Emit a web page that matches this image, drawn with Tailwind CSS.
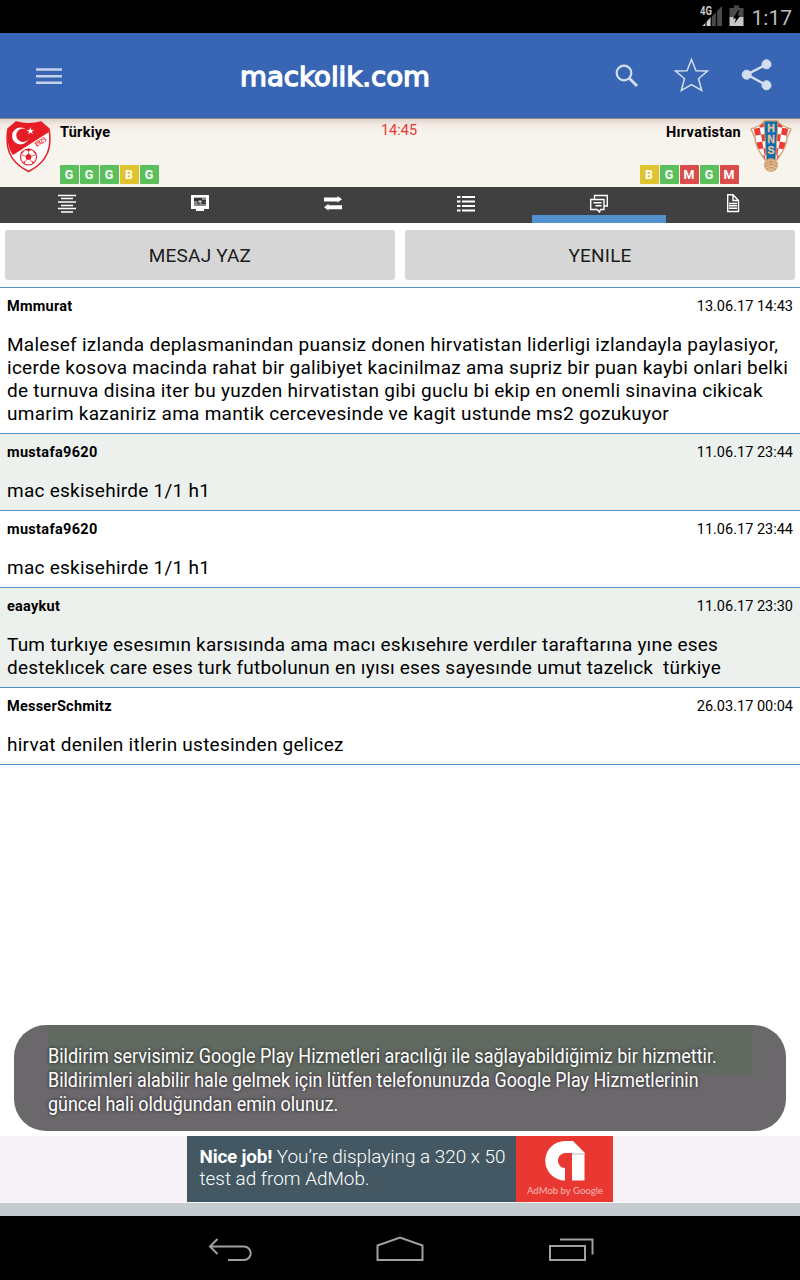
<!DOCTYPE html>
<html lang="tr">
<head>
<meta charset="utf-8">
<title>mackolik.com</title>
<script src="https://cdn.jsdelivr.net/npm/@tailwindcss/browser@4"></script>
</head>
<body class="bg-white">
<div class="relative flex h-[1280px] w-[800px] flex-col overflow-hidden bg-white font-['Roboto',sans-serif] text-black">

  <!-- status bar -->
  <div class="flex h-[33px] shrink-0 items-center justify-end bg-black pr-[8px] text-[#bdbdbd]">
    <svg class="h-[33px] w-[50px]" viewBox="0 0 50 33">
      <path d="M2.500 26 22 6V26Z" fill="#4a4a4a"/><path d="M2.500 26 11 17V26Z" fill="#d0d0d0"/>
      <path d="M6 6V26M11.200 6V26M16.500 6V26" stroke="#000" stroke-width="1.200"/>
      <rect x="-1" y="5" width="12.500" height="11" fill="#000"/>
      <text x="0" y="15" font-family="Roboto" font-weight="700" font-size="12" textLength="12" lengthAdjust="spacingAndGlyphs" fill="#c8c8c8">4G</text>
      <path d="M29.500 8H34V5.500H39V8H43.500V17H29.500Z" fill="#4a4a4a"/><rect x="29.500" y="17" width="14" height="9" fill="#c8c8c8"/>
      <path d="M38.500 10 33 18.500H36L34.500 23.500 40.500 15.500H37.500L39.500 10Z" fill="#000"/>
    </svg>
    <span class="ml-[2px] mt-[4px] text-[21px]">1:17</span>
  </div>

  <!-- app toolbar -->
  <div class="flex h-[85px] shrink-0 items-center bg-[#3866b4]">
    <svg class="ml-9 h-[18px] w-[26px]" viewBox="0 0 26 18"><path d="M0 2.500H26M0 9.200H26M0 15.700H26" stroke="#c3d1e9" stroke-width="2.600"/></svg>
    <svg class="ml-[178px] h-[40px] w-[192px]" viewBox="0 0 192 40" role="img">
      <text x="0" y="30" font-family="DejaVu Sans" font-size="26.500" textLength="190" lengthAdjust="spacingAndGlyphs" fill="#fff" stroke="#fff" stroke-width="1.300">mackolik.com</text>
    </svg>
    <svg class="ml-[183px] h-[24px] w-[24px]" viewBox="0 0 24 24" fill="none" stroke="#d3deef"><circle cx="9" cy="9" r="7.300" stroke-width="2.200"/><path d="m14.500 14.500 7.500 7.500" stroke-width="2.900"/></svg>
    <svg class="ml-[35px] h-[36px] w-[36px]" viewBox="0 0 36 36" fill="none" stroke="#d3deef" stroke-width="1.500"><path d="m17.500 1.500 4.500 11.200 11.500.3-9 7.800 3.200 11.700-10.200-6-10.200 6 3.200-11.700-9-7.800 11.500-.3Z"/></svg>
    <svg class="ml-[31px] h-[34px] w-[32px]" viewBox="0 0 32 34" fill="#d3deef" stroke="#d3deef"><path d="M26 5 6 15.500 26 26.500" fill="none" stroke-width="2.400"/><circle cx="25.500" cy="5.300" r="4.500"/><circle cx="5.700" cy="15.700" r="4.500"/><circle cx="25.500" cy="26.300" r="4.500"/></svg>
  </div>

  <!-- match header -->
  <div class="flex h-[69px] shrink-0 border-t border-[#8f8a8a] bg-linear-to-b from-[#dbd3cc] from-0% via-[#f3e9e2] via-8% to-[#f7f3ed] to-20% text-[14.500px] font-bold">
    <svg class="ml-[6px] mt-[1px] h-[54px] w-[46px] shrink-0" viewBox="0 0 46 54">
      <path d="M10 2Q22.500 5.500 35 2L43 9C46 26 43 41 22.500 51.500 2 41 -1 26 2 9Z" fill="#fff" stroke="#e71d25" stroke-width="1.500"/>
      <path d="M10 2Q22.500 5.500 35 2L42.500 9 43 12 7 35C1.500 28 .8 18 2 9Z" fill="#e71d25"/>
      <circle cx="14.500" cy="16" r="8.500" fill="#fff"/><circle cx="17" cy="15.300" r="6.700" fill="#e71d25"/>
      <path d="m24.500 7 .8 3 3-.3-2.500 1.800 1.200 2.800-2.500-1.700-2.300 2 .8-3-2.700-1.400 3-.3Z" fill="#fff"/>
      <text transform="translate(30 27.500) rotate(-32)" font-family="Liberation Serif" font-size="7.500" font-weight="700" fill="#e71d25" textLength="13">1923</text>
      <circle cx="22.500" cy="37" r="8" fill="#fff" stroke="#e71d25" stroke-width="1.100"/>
      <path d="m22.500 33.500 3.300 2.500-1.200 3.800h-4.200l-1.200-3.800ZM19 29.500l3.500 2 3.500-2-3.500-1ZM15 34l2.500-2-1-1.500-2 3ZM30 34l-2.500-2 1-1.500 2 3ZM17 42.500l2 1.200-.5-3ZM28 42.500l-2 1.200.5-3Z" fill="#e71d25"/>
      <path d="M22.500 34V31M26 36l3-1M24.500 40l2 2.500M20.500 40l-2 2.500M19 36l-3-1" stroke="#e71d25" stroke-width=".7"/>
    </svg>
    <div class="ml-2 flex w-[240px] flex-col">
      <div class="mt-[3px] h-[22px] leading-[22px] tracking-[0.250px]">Türkiye</div>
      <div class="mt-[21px] flex gap-px text-[12.500px] leading-[20px] text-white">
        <span class="h-[19px] w-[19px] rounded-[1px] bg-[#5bc05c] pr-px text-center">G</span><span class="h-[19px] w-[19px] rounded-[1px] bg-[#5bc05c] pr-px text-center">G</span><span class="h-[19px] w-[19px] rounded-[1px] bg-[#5bc05c] pr-px text-center">G</span><span class="h-[19px] w-[19px] rounded-[1px] bg-[#dfc32f] pr-px text-center">B</span><span class="h-[19px] w-[19px] rounded-[1px] bg-[#5bc05c] pr-px text-center">G</span>
      </div>
    </div>
    <div class="w-[198px] pt-px text-center text-[14.500px] font-normal leading-[22px] text-[#e8372f]">14:45</div>
    <div class="flex w-[243px] flex-col items-end">
      <div class="mt-[3px] h-[22px] leading-[22px] tracking-[0.300px]">Hırvatistan</div>
      <div class="mr-px mt-[21px] flex gap-px pr-px text-[12.500px] leading-[20px] text-white">
        <span class="h-[19px] w-[19px] rounded-[1px] bg-[#dfc32f] pr-px text-center">B</span><span class="h-[19px] w-[19px] rounded-[1px] bg-[#5bc05c] pr-px text-center">G</span><span class="h-[19px] w-[19px] rounded-[1px] bg-[#d94c4a] pr-px text-center">M</span><span class="h-[19px] w-[19px] rounded-[1px] bg-[#5bc05c] pr-px text-center">G</span><span class="h-[19px] w-[19px] rounded-[1px] bg-[#d94c4a] pr-px text-center">M</span>
      </div>
    </div>
    <svg class="ml-[9px] mt-px h-[54px] w-[42px] shrink-0" viewBox="0 0 42 54">
      <defs>
        <pattern id="checks" width="12" height="14" patternUnits="userSpaceOnUse"><rect width="12" height="14" fill="#fff"/><path d="M0 0h6v7H0zM6 7h6v7H6z" fill="#ee3b32"/></pattern>
        <clipPath id="shield"><path d="M15 1H27L33 6 41 9 37 18C37 27 31 34 27 40H15C11 34 5 27 5 18L1 9 9 6Z"/></clipPath>
      </defs>
      <g clip-path="url(#shield)">
        <rect x="-10" width="34" height="54" fill="url(#checks)" transform="rotate(-10 15 20)"/>
        <rect x="21" width="34" height="54" fill="url(#checks)" transform="rotate(10 27 20)"/>
      </g>
      <path d="M15 1H27L33 6 41 9 37 18C37 27 31 34 27 40H15C11 34 5 27 5 18L1 9 9 6Z" fill="none" stroke="#cfa274" stroke-width="1.300"/>
      <path d="M14 1H28L25.500 41H16.500Z" fill="#0a6ab0" stroke="#cfa274"/>
      <g font-family="Liberation Sans" font-weight="700" font-size="10.500" fill="#e6c498" stroke="#e6c498" stroke-width=".3" text-anchor="middle"><text x="21" y="12">H</text><text x="21" y="23">N</text><text x="21" y="34">S</text></g>
      <circle cx="21" cy="45" r="6.500" fill="#e0b98f" stroke="#c89865" stroke-width=".8"/>
      <path d="M15 44q6-5 12 0M15 47q6-5 12 0M16 50q5-5 10 0M21 39v6" fill="none" stroke="#b98350" stroke-width=".7"/>
    </svg>
  </div>

  <!-- tabs -->
  <div class="grid h-[36px] shrink-0 grid-cols-[133px_133px_133px_133px_134px_134px] bg-[#404040] text-white">
    <div class="flex justify-center pt-[6px]"><svg class="h-5 w-5" viewBox="0 0 20 20" stroke="#fff" stroke-width="1.500"><path d="M1 2.500h18M4 5.500h12M1 9h18M4 12.500h12M1 15.500h18M4 19h12"/></svg></div>
    <div class="flex justify-center pt-[6px]"><svg class="h-5 w-5" viewBox="0 0 20 20"><path d="M1 2h18v14h-5v2H6v-2H1Z" fill="#fff"/><rect x="4" y="4.500" width="12" height="8.500" fill="#888"/><path d="M4 5h8v2h4v1.500h-2v1h2V11h-4V9.500h-2l-1 2H8L7 8H4Z" fill="#333"/><rect x="8.500" y="7.500" width="3" height="2" fill="#ddd"/></svg></div>
    <div class="flex justify-center pt-[6px]"><svg class="h-5 w-5" viewBox="0 0 20 20" fill="#fff"><path d="M1 4.500h13.500V3L19 6.200l-4.500 3.300V8.500H1ZM19 12.200H5.500v-1.500L1 14.200l4.500 3.300V16.200h13.500Z"/></svg></div>
    <div class="flex justify-center pt-[6px]"><svg class="h-5 w-5" viewBox="0 0 20 20" stroke="#fff" stroke-width="1.900"><path d="M1 4h3.500M6 4h13M1 8.500h3.500M6 8.500h13M1 13h3.500M6 13h13M1 17.500h3.500M6 17.500h13"/></svg></div>
    <div class="flex flex-col items-center justify-between pt-[6px]"><svg class="h-5 w-5" viewBox="0 0 20 20" fill="none" stroke="#fff" stroke-width="1.400"><path d="M5.500 6V2.500H18.300V13H15M4 6.500H15V16.500H11.500L10.500 19 8 16.500H1.700V6.500H4M4.500 9.800h8M6.500 12.800h6"/></svg><div class="h-[8px] w-full bg-[#5191cf]"></div></div>
    <div class="flex justify-center pt-[6px]"><svg class="h-5 w-5" viewBox="0 0 20 20" fill="none" stroke="#fff" stroke-width="1.400"><path d="M4.700 1.700H10L15.500 7.500V18.500H4.700ZM10 2V7.500H15M6 10.500h8M6 12.800h8M6 15.200h8"/></svg></div>
  </div>

  <!-- actions -->
  <div class="flex h-[65px] shrink-0 gap-[10px] border-b border-[#4f8fca] px-[5px] pt-[7px] text-[19px] tracking-[0.200px] text-[#1c1c1c]">
    <div class="flex h-[50px] flex-1 items-center justify-center rounded-[3px] bg-[#d6d6d6] pt-[2px]">MESAJ YAZ</div>
    <div class="flex h-[50px] flex-1 items-center justify-center rounded-[3px] bg-[#d6d6d6] pt-[2px]">YENILE</div>
  </div>

  <!-- messages -->
  <div class="flex flex-1 flex-col">
    <div class="border-b border-[#4f8fca] px-[7px] pb-2 pt-[9px]">
      <div class="flex h-5 items-center justify-between text-[14.500px]"><b class="tracking-[0.250px]">Mmmurat</b><span>13.06.17 14:43</span></div>
      <p class="mt-[16px] whitespace-nowrap text-[19px] leading-[23px] tracking-[0.270px]">Malesef izlanda deplasmanindan puansiz donen hirvatistan liderligi izlandayla paylasiyor,<br>icerde kosova macinda rahat bir galibiyet kacinilmaz ama supriz bir puan kaybi onlari belki<br>de turnuva disina iter bu yuzden hirvatistan gibi guclu bi ekip en onemli sinavina cikicak<br>umarim kazaniriz ama mantik cercevesinde ve kagit ustunde ms2 gozukuyor</p>
    </div>
    <div class="border-b border-[#4f8fca] bg-[#edf1ee] px-[7px] pb-2 pt-[9px]">
      <div class="flex h-5 items-center justify-between text-[14.500px]"><b class="tracking-[0.330px]">mustafa9620</b><span>11.06.17 23:44</span></div>
      <p class="mt-[16px] whitespace-nowrap text-[19px] leading-[23px] tracking-[0.250px]">mac eskisehirde 1/1 h1</p>
    </div>
    <div class="border-b border-[#4f8fca] px-[7px] pb-2 pt-[9px]">
      <div class="flex h-5 items-center justify-between text-[14.500px]"><b class="tracking-[0.330px]">mustafa9620</b><span>11.06.17 23:44</span></div>
      <p class="mt-[16px] whitespace-nowrap text-[19px] leading-[23px] tracking-[0.250px]">mac eskisehirde 1/1 h1</p>
    </div>
    <div class="border-b border-[#4f8fca] bg-[#edf1ee] px-[7px] pb-2 pt-[9px]">
      <div class="flex h-5 items-center justify-between text-[14.500px]"><b class="tracking-[0.250px]">eaaykut</b><span>11.06.17 23:30</span></div>
      <p class="mt-[16px] whitespace-nowrap text-[19px] leading-[23px] tracking-[0.220px]">Tum turkıye esesımın karsısında ama macı eskısehıre verdıler taraftarına yıne eses<br>desteklıcek care eses turk futbolunun en ıyısı eses sayesınde umut tazelıck&nbsp; türkiye</p>
    </div>
    <div class="border-b border-[#4f8fca] px-[7px] pb-2 pt-[9px]">
      <div class="flex h-5 items-center justify-between text-[14.500px]"><b class="tracking-[0.230px]">MesserSchmitz</b><span>26.03.17 00:04</span></div>
      <p class="mt-[16px] whitespace-nowrap text-[19px] leading-[23px] tracking-[0.250px]">hirvat denilen itlerin ustesinden gelicez</p>
    </div>
  </div>

  <!-- ad banner -->
  <div class="flex h-[67px] shrink-0 justify-center bg-[#f8f3f7]">
    <div class="flex h-[66px] w-[426px] bg-[#435862]">
      <p class="w-[329px] whitespace-nowrap pl-[12.500px] pt-[10px] text-[18.900px] font-light leading-[22px] text-white"><b class="font-bold tracking-[-0.200px]">Nice job!</b> You’re displaying a 320 x 50<br>test ad from AdMob.</p>
      <div class="flex w-[97px] flex-col items-center bg-[#e93832] pt-[5px]">
        <svg class="h-[40px] w-[40px]" viewBox="0 0 40 40"><path d="M20 39.500A19.700 19.700 0 0 1 20 0H28L39.500 11.500V39.500H27V12H20A7.700 7.700 0 0 0 14 23.500Q16 27 20 27Z" fill="#fff"/><path d="M27 12H39.500V14H27Z" fill="#dedede"/></svg>
        <svg class="mt-[4px] h-[12px] w-[76px]" viewBox="0 0 76 12"><text x="0" y="9" font-family="Lato" font-size="9.300" textLength="76" lengthAdjust="spacingAndGlyphs" fill="#f9bbb8">AdMob by Google</text></svg>
      </div>
    </div>
  </div>
  <div class="h-[13px] shrink-0 bg-[#c5cccf]"></div>

  <!-- system navigation -->
  <div class="flex h-[64px] shrink-0 items-center bg-black pt-[3px]">
    <svg class="ml-[208px] h-[28px] w-[46px]" viewBox="0 0 46 28" fill="none" stroke="#a0a0a0" stroke-width="2"><path d="M9.500 3 2 10.500 9.500 18M2 10.500H36A6.700 6.700 0 0 1 36 24H20"/></svg>
    <svg class="ml-[121px] h-[30px] w-[50px]" viewBox="0 0 50 30" fill="none" stroke="#a0a0a0" stroke-width="2"><path d="M2.500 25V10.500L25 2.500 47.500 10.500V25Z"/></svg>
    <svg class="ml-[123px] h-[28px] w-[46px]" viewBox="0 0 46 28" fill="none" stroke="#a0a0a0" stroke-width="2"><path d="M2 10H37V24H2ZM12 3.500H44.500V18.500"/></svg>
  </div>

  <!-- toast -->
  <div class="absolute left-[14px] top-[1025px] h-[106px] w-[772px] overflow-hidden rounded-[32px] bg-[#6b686b]">
    <div class="absolute left-[34px] top-0 h-[49px] w-[705px] bg-[#616961]"></div>
    <div class="relative pl-[34px] pt-[19px] text-[20px] leading-[24px] text-white">
      <div class="w-max origin-left scale-x-[0.900] whitespace-nowrap [text-shadow:0_0_4px_rgba(0,0,0,0.75)]">Bildirim servisimiz Google Play Hizmetleri aracılığı ile sağlayabildiğimiz bir hizmettir.</div>
      <div class="w-max origin-left scale-x-[0.893] whitespace-nowrap [text-shadow:0_0_4px_rgba(0,0,0,0.75)]">Bildirimleri alabilir hale gelmek için lütfen telefonunuzda Google Play Hizmetlerinin</div>
      <div class="w-max origin-left scale-x-[0.895] whitespace-nowrap [text-shadow:0_0_4px_rgba(0,0,0,0.75)]">güncel hali olduğundan emin olunuz.</div>
    </div>
  </div>
</div>
</body>
</html>
